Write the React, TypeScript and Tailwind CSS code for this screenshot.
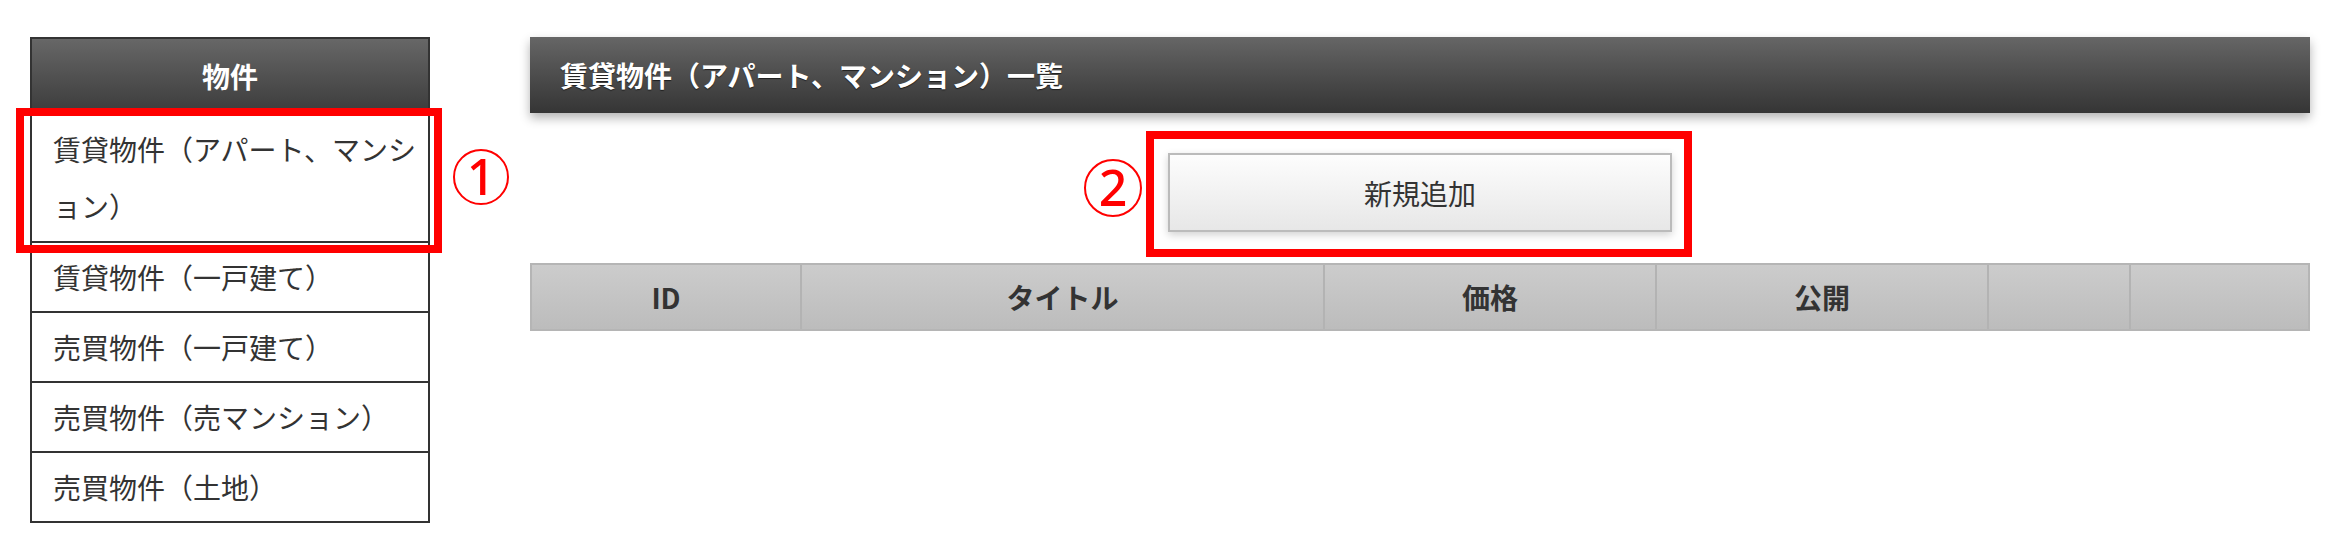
import React from 'react';

const font = "font-['Noto_Sans_CJK_JP','Noto_Sans',sans-serif]";

function Marker({ n, className }: { n: string; className: string }) {
  return (
    <div
      className={`absolute flex items-center justify-center rounded-full border-2 border-[#ff0000] text-[#ff0000] font-['Noto_Sans','Liberation_Sans',sans-serif] text-[50px] font-medium leading-none ${className}`}
    >
      <span className="-mt-[2px]">{n}</span>
    </div>
  );
}

const items = ['賃貸物件（一戸建て）', '売買物件（一戸建て）', '売買物件（売マンション）', '売買物件（土地）'];

const columns = ['ID', 'タイトル', '価格', '公開', '', ''];

export default function App() {
  return (
    <div className={`h-[546px] w-[2338px] overflow-hidden bg-white ${font} flex gap-[100px] pl-[30px] pt-[37px]`}>
      {/* sidebar */}
      <aside className="w-[400px] shrink-0 self-start border-2 border-[#333]">
        <div className="flex h-[74px] items-center justify-center bg-gradient-to-b from-[#676767] to-[#3c3c3c] text-[28px] font-bold text-white">
          物件
        </div>
        <div className="relative border-t-2 border-[#333] pl-[21px] pr-[4px] pt-[6px] pb-[6px] text-[28px] leading-[57px] text-[#333]">
          賃貸物件（アパート、マンシ
          <br />
          ョン）
          <div className="pointer-events-none absolute left-[-16px] top-[-7px] h-[145px] w-[426px] border-[8px] border-[#ff0000]" />
          <Marker n="1" className="left-[421px] top-[34px] h-[56px] w-[56px]" />
        </div>
        {items.map((t) => (
          <div
            key={t}
            className="border-t-2 border-[#333] pl-[21px] pt-[6px] pb-[5px] text-[28px] leading-[57px] text-[#333]"
          >
            {t}
          </div>
        ))}
      </aside>

      {/* main */}
      <main className="flex w-[1780px] shrink-0 flex-col">
        <div className="flex h-[76px] items-center bg-gradient-to-b from-[#666] to-[#353535] pl-[30px] text-[28px] font-bold text-white shadow-[0_5px_10px_rgba(0,0,0,0.3)] [text-shadow:0_1px_1px_rgba(0,0,0,0.6)]">
          賃貸物件（アパート、マンション）一覧
        </div>

        <div className="mt-[40px] flex justify-center">
          <div className="relative">
            <button className="flex h-[79px] w-[504px] items-center justify-center border-2 border-[#bbb] bg-gradient-to-b from-[#fdfdfd] to-[#e7e7e7] text-[28px] text-[#333] shadow-[0_3px_8px_rgba(0,0,0,0.18)]">
              新規追加
            </button>
            <div className="pointer-events-none absolute left-[-22px] top-[-22px] h-[126px] w-[546px] border-[8px] border-[#ff0000]" />
            <Marker n="2" className="left-[-84px] top-[6px] h-[58px] w-[58px]" />
          </div>
        </div>

        <div className="mt-[31px] grid h-[68px] grid-cols-[268px_523px_332px_332px_142px_179px] border-2 border-[#b5b5b5] bg-gradient-to-b from-[#cccccc] to-[#bcbcbc]">
          {columns.map((label, i) => (
            <div
              key={i}
              className={`flex items-center justify-center text-[28px] font-bold text-[#333] ${i === 0 ? '' : 'border-l-2 border-[#b3b3b3]'}`}
            >
              {label}
            </div>
          ))}
        </div>
      </main>
    </div>
  );
}
